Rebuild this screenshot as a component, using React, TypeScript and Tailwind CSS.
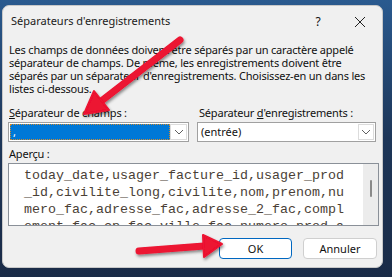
import React from 'react'

const preview = [
    'today_date,usager_facture_id,usager_prod',
    '_id,civilite_long,civilite,nom,prenom,nu',
    'mero_fac,adresse_fac,adresse_2_fac,compl',
    'ement_fac,cp_fac,ville_fac,numero_prod_a',
]

const Chevron = () => (
    <svg width="10" height="6" viewBox="0 0 10 6" className="text-[#606060]">
        <path d="M1 1 L5 5 L9 1" fill="none" stroke="currentColor" strokeWidth="1" />
    </svg>
)

const App = () => {
    return (
        <div className="relative w-[392px] h-[277px] overflow-hidden bg-linear-to-b from-[#2a5a8f] via-[#1d3658] to-[#1a2b47] pt-[5px] pl-[2px] font-['Noto_Sans','Open_Sans',sans-serif]">
            <div className="w-[381px] h-[263px] bg-[#f0f0f0] rounded-[7px] border border-[#c8c8c8] flex flex-col text-[11px] text-[#111]">
                {/* title bar */}
                <div className="h-[31px] flex items-center pl-[8px] shrink-0">
                    <span className="flex-1 text-[11px] text-[#1a1a1a]">Séparateurs d'enregistrements</span>
                    <span className="w-[20px] text-center text-[12px] mr-[26px]">?</span>
                    <svg width="12" height="12" viewBox="0 0 12 12" className="mr-[16px]">
                        <path d="M1 1 L11 11 M11 1 L1 11" stroke="#222" strokeWidth="1" />
                    </svg>
                </div>

                <div className="pl-[5px] pr-[4px] pt-[6px] flex flex-col">
                    <p className="pl-[1px] leading-[13px] whitespace-nowrap tracking-[-0.2px]">
                        Les champs de données doivent être séparés par un caractère appelé<br />
                        séparateur de champs. De même, les enregistrements doivent être<br />
                        séparés par un séparateur d'enregistrements. Choisissez-en un dans les<br />
                        listes ci-dessous.
                    </p>

                    <div className="flex mt-[11px] gap-[8px]">
                        <div className="w-[181px] flex flex-col">
                            <label className="pl-[1px] leading-[13px] tracking-[-0.2px]">
                                <span className="underline">S</span>éparateur de champs :
                            </label>
                            <div className="mt-[3px] h-[20px] bg-white border border-[#a0a0a0] flex p-[1px]">
                                <div className="flex-1 bg-[#0078d7] outline-1 outline-dotted outline-[#d08a30] -outline-offset-1 text-white leading-[16px] pl-[3px]">
                                    ,
                                </div>
                                <div className="w-[17px] border border-[#dcdcdc] flex items-center justify-center bg-white">
                                    <Chevron />
                                </div>
                            </div>
                        </div>
                        <div className="w-[179px] flex flex-col">
                            <label className="pl-[2px] leading-[13px] tracking-[-0.2px]">
                                Séparateur <span className="underline">d</span>'enregistrements :
                            </label>
                            <div className="mt-[3px] h-[20px] bg-white border border-[#a0a0a0] flex p-[1px]">
                                <div className="flex-1 pl-[2px] leading-[16px]">(entrée)</div>
                                <div className="w-[16px] border border-[#dcdcdc] flex items-center justify-center">
                                    <Chevron />
                                </div>
                            </div>
                        </div>
                    </div>

                    <label className="mt-[5px] pl-[1px] leading-[13px] tracking-[-0.2px]">Aperçu :</label>
                    <div className="mt-[3px] w-[371px] h-[63px] bg-white border border-[#8a9098] flex overflow-hidden">
                        <div className="flex-1 min-w-0 pl-[15px] pt-[3px] font-['Liberation_Mono',monospace] text-[13.33px] leading-[17px] text-[#4a3f36] whitespace-pre overflow-hidden">
                            {preview.map((line, i) => (
                                <div key={i}>{line}</div>
                            ))}
                        </div>
                        <div className="w-[15px] shrink-0 bg-[#ececec] flex justify-center pt-[16px]">
                            <div className="w-[2px] h-[17px] bg-[#8a8a8a] rounded-full" />
                        </div>
                    </div>

                    <div className="flex justify-end gap-[11px] mt-[12px] pr-[1px]">
                        <button className="w-[73px] h-[21px] bg-white border border-[#0067c0] rounded-[4px] text-[11px] leading-[19px]">
                            OK
                        </button>
                        <button className="w-[74px] h-[21px] bg-white border border-[#cfcfcf] rounded-[4px] text-[11px] leading-[19px]">
                            Annuler
                        </button>
                    </div>
                </div>
            </div>

            {/* annotation arrows */}
            <svg className="absolute inset-0 pointer-events-none" width="392" height="277" viewBox="0 0 392 277">
                <defs>
                    <filter id="sh" x="-20%" y="-20%" width="140%" height="140%">
                        <feDropShadow dx="1" dy="2" stdDeviation="1.5" floodColor="#000" floodOpacity="0.45" />
                    </filter>
                </defs>
                <g filter="url(#sh)" fill="#ec1230" stroke="#ec1230" strokeLinecap="round" strokeLinejoin="round">
                    <line x1="180" y1="40" x2="100" y2="102" strokeWidth="7" />
                    <polygon points="84,114 109,110 94,91" strokeWidth="2" />
                    <line x1="139" y1="251" x2="204" y2="246" strokeWidth="7" />
                    <polygon points="222,244 203,235 204,257" strokeWidth="2" />
                </g>
            </svg>
        </div>
    )
}

export default App
